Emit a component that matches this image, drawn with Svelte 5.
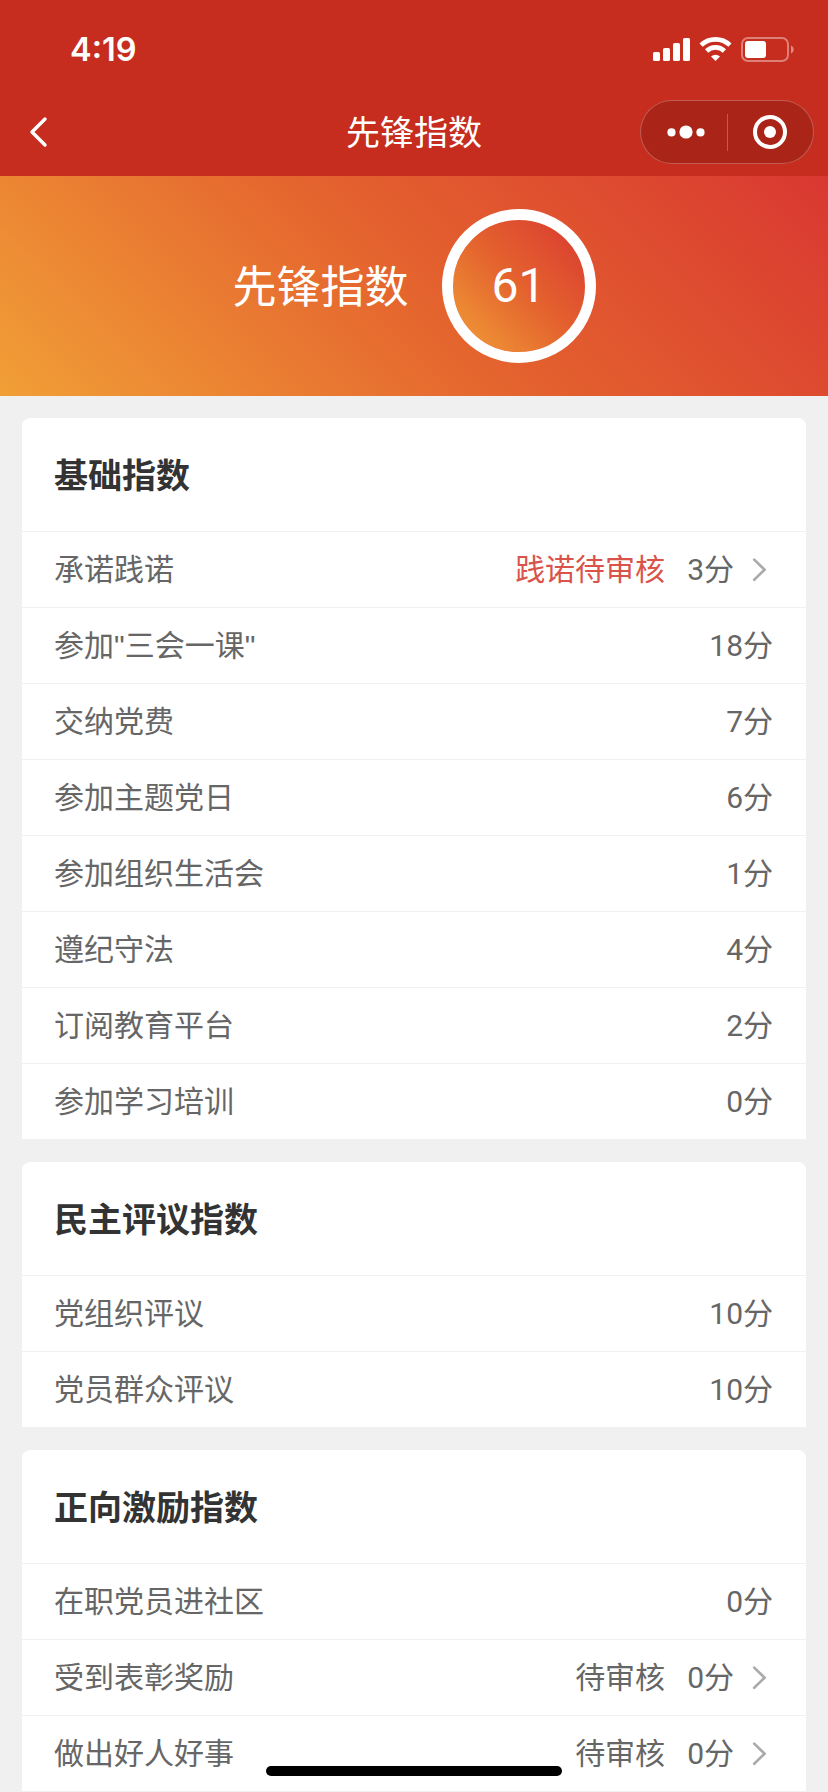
<script lang="ts">
  type Item = { name: string; score: number; status?: string; pending?: boolean; link?: boolean };
  type Group = { title: string; items: Item[] };

  const total = 61;

  const groups: Group[] = [
    {
      title: '基础指数',
      items: [
        { name: '承诺践诺', score: 3, status: '践诺待审核', pending: true, link: true },
        { name: '参加"三会一课"', score: 18 },
        { name: '交纳党费', score: 7 },
        { name: '参加主题党日', score: 6 },
        { name: '参加组织生活会', score: 1 },
        { name: '遵纪守法', score: 4 },
        { name: '订阅教育平台', score: 2 },
        { name: '参加学习培训', score: 0 }
      ]
    },
    {
      title: '民主评议指数',
      items: [
        { name: '党组织评议', score: 10 },
        { name: '党员群众评议', score: 10 }
      ]
    },
    {
      title: '正向激励指数',
      items: [
        { name: '在职党员进社区', score: 0 },
        { name: '受到表彰奖励', score: 0, status: '待审核', link: true },
        { name: '做出好人好事', score: 0, status: '待审核', link: true }
      ]
    }
  ];
</script>

<div class="page">
  <header>
    <div class="status-bar">
      <span class="time">4:19</span>
      <svg class="status-icons" width="142" height="28" viewBox="0 0 142 28" fill="#fff">
        <rect x="0" y="16" width="7" height="9" rx="1.6" />
        <rect x="10" y="12" width="7" height="13" rx="1.6" />
        <rect x="20" y="7" width="7" height="18" rx="1.6" />
        <rect x="30" y="2" width="7" height="23" rx="1.6" />
        <g fill="none" stroke="#fff" stroke-width="4.6">
          <path d="M48.1 9.2A20.8 20.8 0 0 1 76.9 9.2" />
          <path d="M53.6 15A12.8 12.8 0 0 1 71.4 15" />
        </g>
        <path d="M62.5 25L58 20.4A6.6 6.6 0 0 1 67 20.4Z" />
        <rect x="89" y="2" width="46" height="23" rx="6" fill="none" stroke="#fff" stroke-opacity=".4" stroke-width="2" />
        <rect x="92" y="5" width="21" height="17" rx="3" />
        <path d="M138 9.5A4.3 4.3 0 0 1 138 17.5Z" fill-opacity=".45" />
      </svg>
    </div>
    <nav>
      <svg class="back" width="20" height="34" viewBox="0 0 20 34">
        <path d="M17 4L4 17L17 30" fill="none" stroke="#fff" stroke-width="3.4" stroke-linecap="round" stroke-linejoin="round" />
      </svg>
      <h1>先锋指数</h1>
      <div class="capsule">
        <svg width="38" height="14" viewBox="0 0 38 14" fill="#fff">
          <circle cx="4.5" cy="7.4" r="4.1" />
          <circle cx="19" cy="7" r="6.6" />
          <circle cx="33.5" cy="7.4" r="4.1" />
        </svg>
        <i></i>
        <svg width="34" height="34" viewBox="0 0 34 34">
          <circle cx="17" cy="17" r="15" fill="none" stroke="#fff" stroke-width="4" />
          <circle cx="17" cy="17" r="6" fill="#fff" />
        </svg>
      </div>
    </nav>
  </header>

  <section class="hero">
    <span class="label">先锋指数</span>
    <div class="ring">{total}</div>
  </section>

  <main>
    {#each groups as group}
      <section class="card">
        <h2>{group.title}</h2>
        <ul>
          {#each group.items as item}
            <li>
              <span class="name">{item.name}</span>
              {#if item.status}
                <span class="status" class:pending={item.pending}>{item.status}</span>
              {/if}
              <span class="score">{item.score}分</span>
              {#if item.link}
                <svg class="arrow" width="16" height="26" viewBox="0 0 16 26">
                  <path d="M2.2 2.6L12.6 12.7L2.2 22.8" fill="none" stroke="#aaa" stroke-width="2.6" stroke-linecap="round" />
                </svg>
              {/if}
            </li>
          {/each}
        </ul>
      </section>
    {/each}
  </main>

  <div class="home-indicator"></div>
</div>

<style>
  :global(body) {
    background: #f0f0f0;
  }

  .page {
    position: relative;
    width: 828px;
    height: 1792px;
    overflow: hidden;
    background: #f0f0f0;
    font-family: "Liberation Sans", "Noto Sans CJK SC", sans-serif;
    color: #666;
  }

  header {
    height: 176px;
    background: #c62d1e;
    color: #fff;
  }

  .status-bar {
    box-sizing: border-box;
    height: 88px;
    padding: 12px 33px 0 70px;
    display: flex;
    align-items: center;
    justify-content: space-between;
  }

  .time {
    font: 600 32.5px/1 Inter, sans-serif;
  }

  nav {
    box-sizing: border-box;
    height: 88px;
    padding: 0 14px 0 28px;
    display: grid;
    grid-template-columns: 1fr auto 1fr;
    align-items: center;
  }

  h1 {
    margin: 0 14px 3px 0;
    font-size: 34px;
    font-weight: 400;
  }

  .capsule {
    justify-self: end;
    box-sizing: border-box;
    width: 174px;
    height: 64px;
    padding: 0 26px;
    border: 1px solid rgba(255, 255, 255, 0.25);
    border-radius: 32px;
    background: #aa2517;
    display: flex;
    align-items: center;
    justify-content: space-between;
  }

  .capsule i {
    width: 1px;
    height: 37px;
    margin-right: 4px;
    background: rgba(255, 255, 255, 0.25);
  }

  .hero {
    height: 220px;
    display: flex;
    align-items: center;
    justify-content: center;
    gap: 33px;
    background: linear-gradient(45deg, #f19f37, #e4632e 50%, #d93831);
    color: #fff;
    font-size: 44px;
  }

  .label {
    padding-bottom: 4px;
  }

  .ring {
    box-sizing: border-box;
    width: 154px;
    height: 154px;
    border: 11px solid #fff;
    border-radius: 50%;
    background: linear-gradient(45deg, #f19f37, #e4632e 50%, #d93831) padding-box;
    font-family: Roboto, sans-serif;
    font-size: 48px;
    line-height: 131px;
    text-align: center;
  }

  main {
    padding: 22px;
    display: flex;
    flex-direction: column;
    gap: 22px;
  }

  .card {
    background: #fff;
    border-radius: 8px 8px 0 0;
  }

  h2 {
    box-sizing: border-box;
    height: 114px;
    margin: 0;
    padding: 0 32px;
    border-bottom: 1px solid #f0f0f0;
    font-size: 34px;
    font-weight: 700;
    line-height: 117px;
    color: #333;
  }

  ul {
    margin: 0;
    padding: 0;
    list-style: none;
  }

  li {
    box-sizing: border-box;
    height: 76px;
    padding: 0 33px 0 32px;
    border-bottom: 1px solid #f0f0f0;
    display: flex;
    align-items: center;
    font-size: 30px;
    line-height: 75px;
  }

  .name {
    flex: 1;
  }

  .status {
    margin-right: 22px;
  }

  .pending {
    color: #d9534a;
  }

  .score {
    font-family: Roboto, "Noto Sans CJK SC", sans-serif;
  }

  .arrow {
    margin: 0 5px 0 18px;
  }

  .home-indicator {
    position: absolute;
    left: 266px;
    bottom: 16px;
    width: 296px;
    height: 10px;
    border-radius: 5px;
    background: #000;
  }
</style>
